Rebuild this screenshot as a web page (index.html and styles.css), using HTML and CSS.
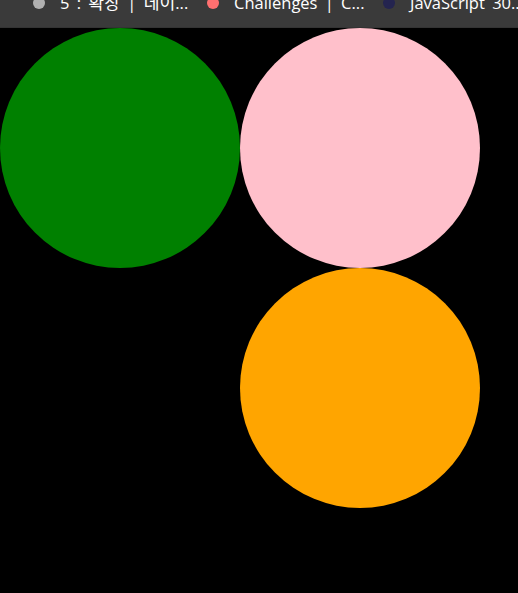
FILE: index.html
```html
<!DOCTYPE html>
<html lang="ko">
<head>
<meta charset="utf-8">
<title>Circles</title>
<link rel="stylesheet" href="styles.css">
</head>
<body>
<nav class="bar">
  <div class="mark"><span class="dot dot-grey"></span><span class="label">5 : <span class="ko">확장</span> | <span class="ko">데이</span>...</span></div>
  <div class="mark"><span class="dot dot-red"></span><span class="label">Challenges | C...</span></div>
  <div class="mark"><span class="dot dot-navy"></span><span class="label">JavaScript 30...</span></div>
</nav>
<main class="grid">
  <div class="circle green"></div>
  <div class="circle pink"></div>
  <div class="circle empty"></div>
  <div class="circle orange"></div>
</main>
</body>
</html>
```
FILE: styles.css
```css
html, body {
  margin: 0;
  height: 100%;
  background: #000;
  overflow: hidden;
}
.bar {
  height: 28px;
  box-sizing: border-box;
  border-bottom: 1px solid #333;
  background: #3a3a3a;
  display: flex;
  align-items: flex-start;
  padding-left: 33px;
  overflow: hidden;
  white-space: nowrap;
  font-family: "Open Sans", "Noto Sans CJK KR", sans-serif;
  font-size: 16.5px;
  word-spacing: 3px;
  color: #fff;
}
.mark {
  display: flex;
  align-items: flex-start;
  flex: none;
  height: 27px;
}
.mark:nth-child(1) { width: 174px; }
.mark:nth-child(2) { width: 176px; }
.dot {
  width: 12px;
  height: 12px;
  border-radius: 50%;
  margin-top: -3px;
  flex: none;
}
.dot-grey { background: #b0b0b0; }
.dot-red { background: #ff7070; }
.dot-navy { background: #24244f; }
.label {
  margin-left: 15px;
  line-height: 20px;
  margin-top: -7px;
}
.ko { font-size: 17.2px; }
.grid {
  display: grid;
  grid-template-columns: 240px 240px;
  grid-auto-rows: 240px;
}
.circle { border-radius: 50%; }
.green { background: #008000; }
.pink { background: #ffc0cb; }
.orange { background: #ffa500; }
.empty { background: transparent; }
```
